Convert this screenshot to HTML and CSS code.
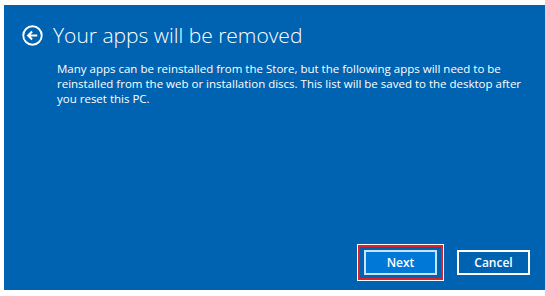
FILE: index.html
```html
<!DOCTYPE html>
<html lang="en">
<head>
    <meta charset="UTF-8">
    <title>Reset this PC</title>
    <link rel="stylesheet" href="styles.css">
</head>
<body>

    <div class="panel">
        <div class="header">
            <!-- back arrow in a circle -->
            <svg class="back" width="21" height="21" viewBox="0 0 20 20">
                <circle cx="10" cy="10" r="8.8" fill="none" stroke="#fff" stroke-width="1.8"/>
                <path d="M14.5 10H6M9.6 6.2L5.8 10l3.8 3.8" fill="none" stroke="#fff" stroke-width="1.9"/>
            </svg>
            <h1 class="title">Your apps will be removed</h1>
        </div>

        <p class="text">Many apps can be reinstalled from the Store, but the following apps will need to be reinstalled from the web or installation discs. This list will be saved to the desktop after you reset this PC.</p>

        <div class="footer">
            <div class="focus">
                <button class="button button-primary">Next</button>
            </div>
            <button class="button">Cancel</button>
        </div>
    </div>

</body>
</html>
```

FILE: styles.css
```css
body {
    margin: 0;
    background-color: #fff;
    font-family: "Open Sans", "Noto Sans", sans-serif;
}

.panel {
    margin: 5px 0 0 4px;
    height: 285px;
    background-color: #0063b1;
    color: #fff;
    display: flex;
    flex-direction: column;
    box-sizing: border-box;
    padding: 18px 0 0 18px;
}

.header {
    display: flex;
    align-items: center;
    gap: 10px;
}

.back {
    flex: none;
}

.title {
    margin: 0;
    font-size: 21px;
    font-weight: 300;
    line-height: 24px;
}

.text {
    margin: 14px 0 0 35px;
    width: 470px;
    font-size: 11.5px;
    line-height: 15px;
}

.footer {
    margin-top: auto;
    display: flex;
    justify-content: flex-end;
    align-items: center;
    gap: 14px;
    padding: 0 15px 10px 0;
}

.focus {
    border: 2px solid #d7232e;
    outline: 1px solid #fff;
    padding: 3px 4px;
}

.button {
    width: 73px;
    height: 25px;
    background-color: #0063b1;
    border: 2px solid #fff;
    color: #fff;
    font-family: "Open Sans", sans-serif;
    font-size: 12px;
    font-weight: 600;
    display: block;
}

.button-primary {
    background-color: #0078d7;
    border-color: #c9e3f7;
}
```
